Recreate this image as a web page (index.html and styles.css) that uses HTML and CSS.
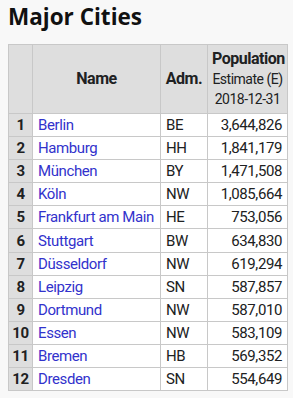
FILE: index.html
```html
<!DOCTYPE html>
<html>
<head>
<meta charset="utf-8">
<link rel="stylesheet" href="styles.css">
</head>
<body>
<h2 class="title">Major Cities</h2>
<table class="cities">
  <colgroup>
    <col class="c-rank"><col class="c-name"><col class="c-adm"><col class="c-pop">
  </colgroup>
  <thead>
    <tr>
      <th></th>
      <th>Name</th>
      <th>Adm.</th>
      <th>Population<br><span class="sub">Estimate (E)</span><br><span class="sub">2018-12-31</span></th>
    </tr>
  </thead>
  <tbody>
    <tr><th>1</th><td><a href="#">Berlin</a></td><td>BE</td><td class="num">3,644,826</td></tr>
    <tr><th>2</th><td><a href="#">Hamburg</a></td><td>HH</td><td class="num">1,841,179</td></tr>
    <tr><th>3</th><td><a href="#">München</a></td><td>BY</td><td class="num">1,471,508</td></tr>
    <tr><th>4</th><td><a href="#">Köln</a></td><td>NW</td><td class="num">1,085,664</td></tr>
    <tr><th>5</th><td><a href="#">Frankfurt am Main</a></td><td>HE</td><td class="num">753,056</td></tr>
    <tr><th>6</th><td><a href="#">Stuttgart</a></td><td>BW</td><td class="num">634,830</td></tr>
    <tr><th>7</th><td><a href="#">Düsseldorf</a></td><td>NW</td><td class="num">619,294</td></tr>
    <tr><th>8</th><td><a href="#">Leipzig</a></td><td>SN</td><td class="num">587,857</td></tr>
    <tr><th>9</th><td><a href="#">Dortmund</a></td><td>NW</td><td class="num">587,010</td></tr>
    <tr><th>10</th><td><a href="#">Essen</a></td><td>NW</td><td class="num">583,109</td></tr>
    <tr><th>11</th><td><a href="#">Bremen</a></td><td>HB</td><td class="num">569,352</td></tr>
    <tr><th>12</th><td><a href="#">Dresden</a></td><td>SN</td><td class="num">554,649</td></tr>
  </tbody>
</table>
</body>
</html>
```
FILE: styles.css
```css
html, body {
  margin: 0;
  padding: 0;
  background: #f8f8f8;
}
body {
  padding: 0 8px;
  font-family: Roboto, "Liberation Sans", sans-serif;
  color: #202122;
}
.title {
  font-family: "Open Sans", "Noto Sans", sans-serif;
  font-weight: 700;
  font-size: 22.5px;
  line-height: 32px;
  margin: 1px 0 11px 0;
  color: #111;
}
.cities {
  border-collapse: collapse;
  table-layout: fixed;
  width: 279px;
  font-size: 15px;
  letter-spacing: -0.4px;
  line-height: 20px;
  background: #fff;
}
.c-rank { width: 24px; }
.c-name { width: 128px; }
.c-adm { width: 47px; }
.c-pop { width: 80px; }
.cities th, .cities td {
  border: 1px solid #c8c8c8;
  padding: 1px 5px;
  white-space: nowrap;
}
.cities tbody tr {
  height: 23.1px;
}
.cities thead th {
  background: #dedede;
  padding: 4px 4px;
  text-align: center;
  vertical-align: middle;
  font-weight: 700;
  font-size: 16px;
  letter-spacing: -0.5px;
}
.cities .sub {
  font-weight: 400;
  font-size: 14px;
  letter-spacing: -0.5px;
}
.cities tbody th {
  background: #dedede;
  text-align: center;
  padding: 1px 0;
  font-weight: 700;
}
.cities td.num {
  text-align: right;
}
.cities a {
  color: #3232cc;
  text-decoration: none;
}
```
